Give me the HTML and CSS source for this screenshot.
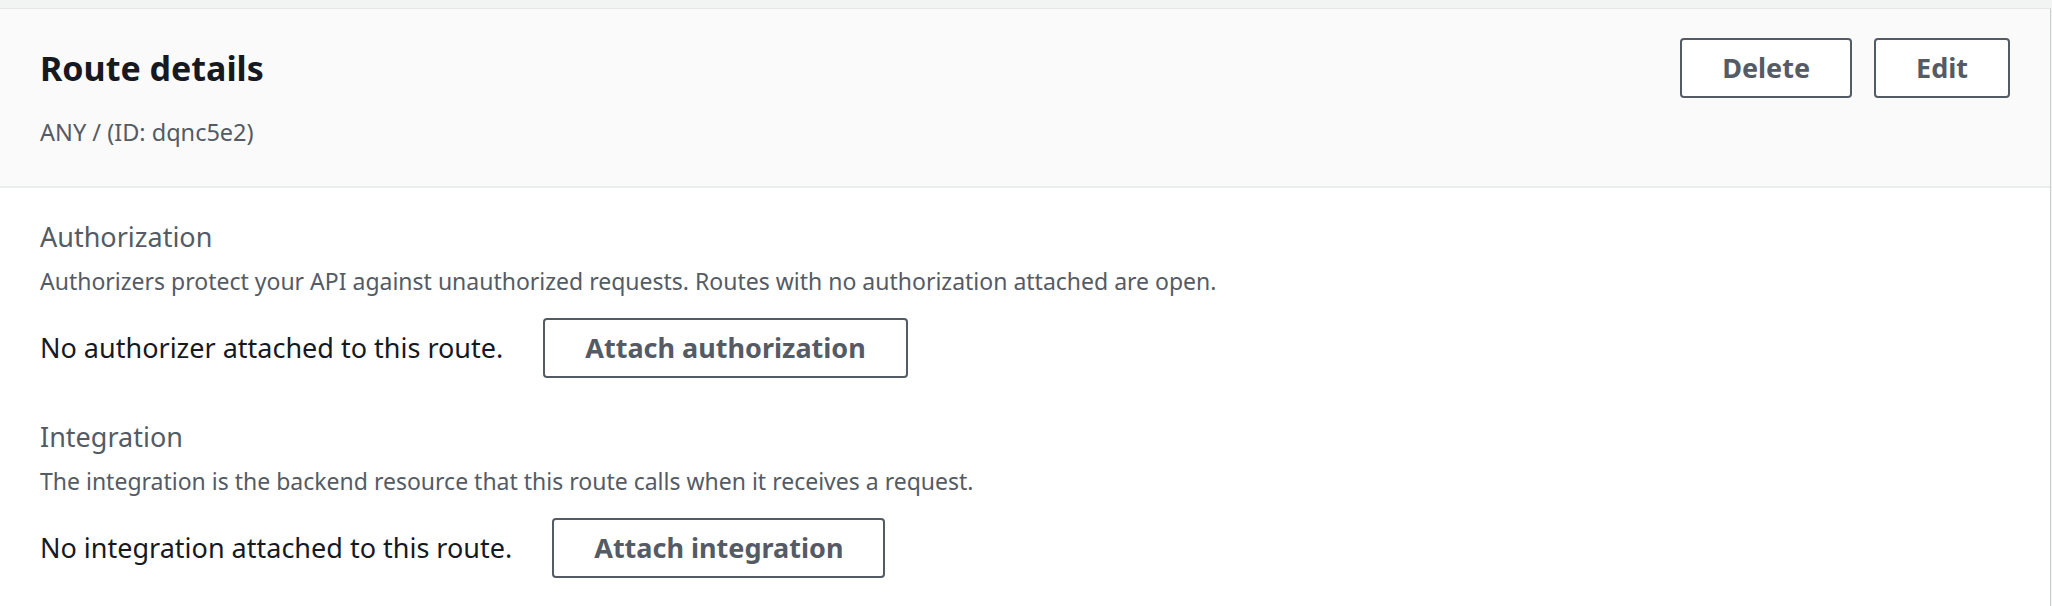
FILE: index.html
```html
<!DOCTYPE html>
<html lang="en">
<head>
<meta charset="utf-8">
<title>Route details</title>
<link rel="stylesheet" href="styles.css">
</head>
<body>
  <div class="card">
    <div class="card-header">
      <div class="header-text">
        <h2 class="title">Route details</h2>
        <div class="subtitle">ANY / (ID: dqnc5e2)</div>
      </div>
      <div class="actions">
        <button class="btn">Delete</button>
        <button class="btn">Edit</button>
      </div>
    </div>
    <div class="card-body">
      <section class="section">
        <h3 class="section-title">Authorization</h3>
        <p class="section-desc">Authorizers protect your API against unauthorized requests. Routes with no authorization attached are open.</p>
        <div class="row">
          <span class="row-text">No authorizer attached to this route.</span>
          <button class="btn">Attach authorization</button>
        </div>
      </section>
      <section class="section">
        <h3 class="section-title">Integration</h3>
        <p class="section-desc">The integration is the backend resource that this route calls when it receives a request.</p>
        <div class="row">
          <span class="row-text">No integration attached to this route.</span>
          <button class="btn">Attach integration</button>
        </div>
      </section>
    </div>
  </div>
</body>
</html>
```

FILE: styles.css
```css
html, body {
  margin: 0;
  padding: 0;
}

body {
  background: #f2f3f3;
  font-family: "Noto Sans", "Open Sans", "Liberation Sans", sans-serif;
  padding-top: 8px;
  padding-right: 1px;
  height: 606px;
  box-sizing: border-box;
  overflow: hidden;
}

.card {
  background: #ffffff;
  border-top: 1px solid #e4e7e7;
  border-right: 1px solid #c9cdcd;
  min-height: 620px;
}

.card-header {
  background: #fafafa;
  border-bottom: 2px solid #eaeded;
  padding: 29px 40px 34px 40px;
  display: flex;
  justify-content: space-between;
  align-items: flex-start;
}

.title {
  margin: 2px 0 0 0;
  font-size: 34px;
  line-height: 56px;
  font-weight: 700;
  color: #16191f;
}

.subtitle {
  margin-top: 16px;
  font-size: 23.5px;
  line-height: 40px;
  color: #545b64;
}

.actions {
  display: flex;
  gap: 22px;
}

.btn {
  font-family: "Noto Sans", "Open Sans", "Liberation Sans", sans-serif;
  font-size: 27px;
  font-weight: 700;
  line-height: 56px;
  color: #545b64;
  background: #ffffff;
  border: 2px solid #545b64;
  border-radius: 4px;
  padding: 0 40px;
  margin: 0;
  cursor: pointer;
}

.card-body {
  padding: 29px 40px 0 40px;
}

.section + .section {
  margin-top: 39px;
}

.section-title {
  margin: 0;
  font-size: 27px;
  line-height: 40px;
  font-weight: 400;
  color: #545b64;
}

.section-desc {
  margin: 8px 0 0 0;
  font-size: 23px;
  line-height: 32px;
  color: #545b64;
}

.row {
  margin-top: 21px;
  display: flex;
  align-items: center;
  gap: 40px;
}

.row-text {
  font-size: 27px;
  line-height: 40px;
  color: #16191f;
}
```
